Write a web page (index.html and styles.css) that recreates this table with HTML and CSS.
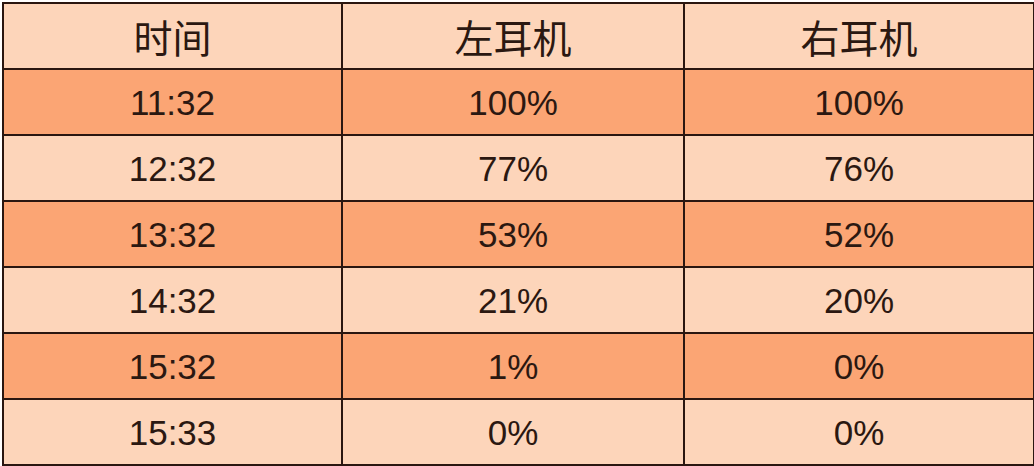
FILE: index.html
```
<!DOCTYPE html>
<html lang="zh">
<head>
<meta charset="utf-8">
<link rel="stylesheet" href="styles.css">
</head>
<body>
<table class="grid">
  <colgroup><col class="c1"><col class="c2"><col class="c3"></colgroup>
  <thead>
    <tr class="light head"><th>时间</th><th>左耳机</th><th>右耳机</th></tr>
  </thead>
  <tbody>
    <tr class="dark"><td>11:32</td><td>100%</td><td>100%</td></tr>
    <tr class="light"><td>12:32</td><td>77%</td><td>76%</td></tr>
    <tr class="dark"><td>13:32</td><td>53%</td><td>52%</td></tr>
    <tr class="light"><td>14:32</td><td>21%</td><td>20%</td></tr>
    <tr class="dark"><td>15:32</td><td>1%</td><td>0%</td></tr>
    <tr class="light"><td>15:33</td><td>0%</td><td>0%</td></tr>
  </tbody>
</table>
</body>
</html>
```
FILE: styles.css
```
html, body {
  margin: 0;
  padding: 0;
  background: #ffffff;
}
body {
  padding: 2px 0 0 2px;
}
.grid {
  border-collapse: collapse;
  width: 1031px;
  table-layout: fixed;
  font-family: "Liberation Sans", "Noto Sans CJK SC", sans-serif;
  color: #2b1811;
  border: 2px solid #2a1610;
}
.c1 { width: 339px; }
.c2 { width: 342px; }
.c3 { width: 350px; }
.grid th, .grid td {
  border: 2px solid #2a1610;
  height: 64px;
  padding: 0;
  text-align: center;
  vertical-align: middle;
  font-size: 35px;
  font-weight: normal;
  line-height: 1;
}
.grid th {
  font-family: "Noto Sans CJK SC", sans-serif;
  font-size: 39px;
}
.light { background: #fdd5ba; }
.dark { background: #fba574; }
```
